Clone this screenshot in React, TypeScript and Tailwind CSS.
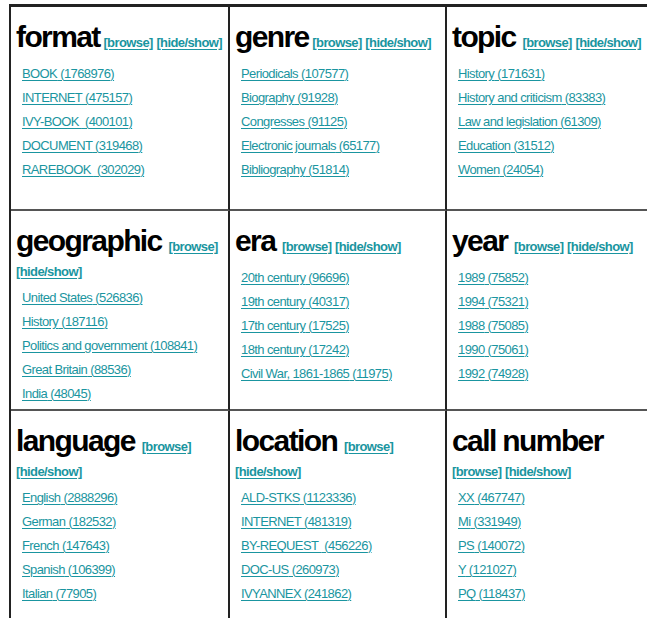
type Facet = {
  title: string;
  bigSpace: boolean;
  items: [string, number][];
};

const facets: Facet[] = [
  {
    title: 'format',
    bigSpace: false,
    items: [
      ['BOOK', 1768976],
      ['INTERNET', 475157],
      ['IVY-BOOK\u00a0', 400101],
      ['DOCUMENT', 319468],
      ['RAREBOOK\u00a0', 302029],
    ],
  },
  {
    title: 'genre',
    bigSpace: false,
    items: [
      ['Periodicals', 107577],
      ['Biography', 91928],
      ['Congresses', 91125],
      ['Electronic journals', 65177],
      ['Bibliography', 51814],
    ],
  },
  {
    title: 'topic',
    bigSpace: true,
    items: [
      ['History', 171631],
      ['History and criticism', 83383],
      ['Law and legislation', 61309],
      ['Education', 31512],
      ['Women', 24054],
    ],
  },
  {
    title: 'geographic',
    bigSpace: true,
    items: [
      ['United States', 526836],
      ['History', 187116],
      ['Politics and government', 108841],
      ['Great Britain', 88536],
      ['India', 48045],
    ],
  },
  {
    title: 'era',
    bigSpace: true,
    items: [
      ['20th century', 96696],
      ['19th century', 40317],
      ['17th century', 17525],
      ['18th century', 17242],
      ['Civil War, 1861-1865', 11975],
    ],
  },
  {
    title: 'year',
    bigSpace: true,
    items: [
      ['1989', 75852],
      ['1994', 75321],
      ['1988', 75085],
      ['1990', 75061],
      ['1992', 74928],
    ],
  },
  {
    title: 'language',
    bigSpace: true,
    items: [
      ['English', 2888296],
      ['German', 182532],
      ['French', 147643],
      ['Spanish', 106399],
      ['Italian', 77905],
    ],
  },
  {
    title: 'location',
    bigSpace: true,
    items: [
      ['ALD-STKS', 1123336],
      ['INTERNET', 481319],
      ['BY-REQUEST\u00a0', 456226],
      ['DOC-US', 260973],
      ['IVYANNEX', 241862],
    ],
  },
  {
    title: 'call number',
    bigSpace: true,
    items: [
      ['XX', 467747],
      ['Mi', 331949],
      ['PS', 140072],
      ['Y', 121027],
      ['PQ', 118437],
    ],
  },
];

const linkCls = 'text-[#1a95a0] underline underline-offset-[2px]';

function FacetCell({ facet, col }: { facet: Facet; col: number }) {
  const border =
    col < 2
      ? 'border-b-2 border-b-[#555] border-r-2 border-r-[#222] pr-[4px]'
      : 'border-b-2 border-b-[#555] pr-0';
  return (
    <div className={`${border} pt-[8px] pl-[5px] text-[13px] leading-[20px]`}>
      <div>
        <span className="text-[30px] leading-[43px] font-bold tracking-[-1.6px] text-black">
          {facet.title}
          {facet.bigSpace ? ' ' : ''}
        </span>
        {!facet.bigSpace && ' '}
        <a href="#" className={`${linkCls} font-bold tracking-[-0.6px]`}>
          [browse]
        </a>{' '}
        <a href="#" className={`${linkCls} font-bold tracking-[-0.6px]`}>
          [hide/show]
        </a>
      </div>
      <ul className="mt-[4px] pl-[6px]">
        {facet.items.map(([label, count]) => (
          <li key={label} className="leading-[24px] tracking-[-0.6px]">
            <a href="#" className={linkCls}>
              {label} ({count})
            </a>
          </li>
        ))}
      </ul>
    </div>
  );
}

export default function App() {
  return (
    <div className="w-[647px] h-[618px] overflow-hidden bg-white font-['Liberation_Sans',Arial,sans-serif]">
      <div className="ml-[9px] mt-[4px] grid grid-cols-[219px_217px_1fr] grid-rows-[204px_200px_220px] border-t-[3px] border-l-2 border-[#222]">
        {facets.map((f, i) => (
          <FacetCell key={f.title} facet={f} col={i % 3} />
        ))}
      </div>
    </div>
  );
}
